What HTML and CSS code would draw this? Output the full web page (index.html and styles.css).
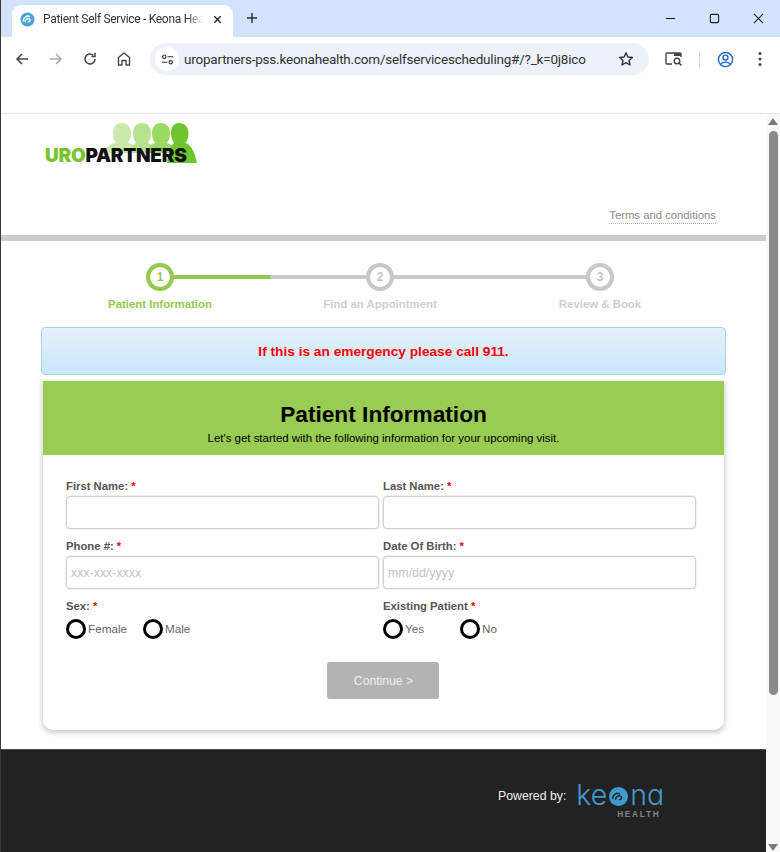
FILE: index.html
```html
<!DOCTYPE html>
<html lang="en">
<head>
<meta charset="utf-8">
<title>Patient Self Service - Keona Health</title>
<link rel="stylesheet" href="styles.css">
</head>
<body>
<div class="browser">
  <div class="tabstrip">
    <div class="tab">
      <svg class="favicon" viewBox="0 0 16 16"><circle cx="8" cy="8" r="7.5" fill="#4aa3d8"/><path d="M3.5 9.5C3.5 6 7 3.5 10 4.5M5.5 10.5C5.5 7.8 8 6.2 10 7.2 11.5 8 11 10.5 9 10.5" fill="none" stroke="#fff" stroke-width="1.5" stroke-linecap="round"/></svg>
      <span class="tab-title">Patient Self Service - Keona Hea</span>
      <svg class="tab-close" viewBox="0 0 10 10"><path d="M1.5 1.5l7 7M8.5 1.5l-7 7" stroke="#222" stroke-width="1.5"/></svg>
    </div>
    <svg class="newtab" viewBox="0 0 12 12"><path d="M6 1v10M1 6h10" stroke="#333" stroke-width="1.5"/></svg>
    <div class="winctl">
      <svg viewBox="0 0 12 12"><path d="M1 6h10" stroke="#222" stroke-width="1.2"/></svg>
      <svg viewBox="0 0 12 12"><rect x="1.5" y="1.5" width="9" height="9" rx="1.5" fill="none" stroke="#222" stroke-width="1.2"/></svg>
      <svg viewBox="0 0 12 12"><path d="M1 1l10 10M11 1L1 11" stroke="#222" stroke-width="1.2"/></svg>
    </div>
  </div>
  <div class="toolbar">
    <div class="navbtns">
      <svg viewBox="0 0 16 16"><path d="M14 8H3M8 3L3 8l5 5" fill="none" stroke="#444" stroke-width="1.5"/></svg>
      <svg viewBox="0 0 16 16"><path d="M2 8h11M8 3l5 5-5 5" fill="none" stroke="#aaa" stroke-width="1.5"/></svg>
      <svg viewBox="0 0 16 16"><path d="M13 8a5 5 0 1 1-1.6-3.7M13 1.8v3.6H9.4" fill="none" stroke="#444" stroke-width="1.5"/></svg>
      <svg viewBox="0 0 16 16"><path d="M2.5 14V6.5L8 2l5.500 4.500V14H10V9.500H6V14z" fill="none" stroke="#444" stroke-width="1.4" stroke-linejoin="round"/></svg>
    </div>
    <div class="omnibox">
      <span class="site-chip"><svg viewBox="0 0 14 14"><circle cx="3.500" cy="4" r="1.800" fill="none" stroke="#333" stroke-width="1.200"/><path d="M7 4h6M1 10h6" stroke="#333" stroke-width="1.200"/><circle cx="10.500" cy="10" r="1.800" fill="none" stroke="#333" stroke-width="1.200"/></svg></span>
      <span class="url">uropartners-pss.keonahealth.com/selfservicescheduling#/?_k=0j8ico</span>
      <svg class="star" viewBox="0 0 16 16"><path d="M8 1.800l1.900 4.200 4.500.5-3.400 3 1 4.500L8 11.700 4 14l1-4.500-3.400-3 4.500-.5z" fill="none" stroke="#333" stroke-width="1.400" stroke-linejoin="round"/></svg>
    </div>
    <div class="tools">
      <svg class="tool-lens" viewBox="0 0 18 16"><path d="M7 13H2a1 1 0 0 1-1-1V3a1 1 0 0 1 1-1h13a1 1 0 0 1 1 1v3" fill="none" stroke="#444" stroke-width="1.400"/><path d="M9 2h7v3H9z" fill="#444"/><circle cx="12" cy="10" r="2.800" fill="none" stroke="#444" stroke-width="1.400"/><path d="M14 12l2.500 2.500" stroke="#444" stroke-width="1.500"/></svg>
      <span class="tool-sep"></span>
      <svg class="tool-profile" viewBox="0 0 18 18"><circle cx="9" cy="9" r="7.500" fill="none" stroke="#1f66d1" stroke-width="1.500"/><circle cx="9" cy="7" r="2.600" fill="none" stroke="#1f66d1" stroke-width="1.500"/><path d="M4 14c1.500-3 8.500-3 10 0" fill="none" stroke="#1f66d1" stroke-width="1.500"/></svg>
      <svg class="tool-menu" viewBox="0 0 4 16"><circle cx="2" cy="2.500" r="1.500" fill="#444"/><circle cx="2" cy="8" r="1.500" fill="#444"/><circle cx="2" cy="13.500" r="1.500" fill="#444"/></svg>
    </div>
  </div>
  <div class="bookmarks"></div>
  <div class="viewport">
    <div class="page">
      <header class="site-header">
        <div class="logo">
          <svg class="logo-people" viewBox="0 0 152 40">
            <path fill="#cbe9ab" d="M77 0c5.500 0 9 4 9 10 0 4-1 7-3 10 5 1 9 4 11 10H57c3-6 9-9 14-10-2-3-3-6-3-10C68 4 71.500 0 77 0z"/>
            <path fill="#b7e28e" d="M97 0c5.500 0 9 4 9 10 0 4-1 7-3 10 4 1 7 4 9 10H83c2-6 6-9 8-10-2-3-3-6-3-10C88 4 91.500 0 97 0z"/>
            <path fill="#9bd962" d="M116 0c5.500 0 9 4 9 10 0 4-1 7-3 10 4 1 7 4 9 10h-30c2-6 6-9 9-10-2-3-3-6-3-10 0-6 3.500-10 9-10z"/>
            <path fill="#6dc62e" d="M134 0c5.500 0 9.500 4 9.500 10 0 4-1 7-3 10 5 1.500 9 8 11.500 20h-30c1-10 4-18 7-20-2-3-3-6-3-10 0-6 3-10 8-10z"/>
          </svg>
          <span class="logo-text"><span class="logo-uro">URO</span>PARTNERS</span>
        </div>
        <div class="terms-row"><a class="terms">Terms and conditions</a></div>
      </header>
      <div class="divider"></div>
      <ol class="steps">
        <li class="step step-active">
          <span class="step-circle">1</span>
          <span class="step-label">Patient Information</span>
        </li>
        <li class="step">
          <span class="step-circle">2</span>
          <span class="step-label">Find an Appointment</span>
        </li>
        <li class="step">
          <span class="step-circle">3</span>
          <span class="step-label">Review &amp; Book</span>
        </li>
      </ol>
      <div class="alert">If this is an emergency please call 911.</div>
      <section class="card">
        <div class="card-head">
          <h1>Patient Information</h1>
          <p>Let's get started with the following information for your upcoming visit.</p>
        </div>
        <form class="form">
          <div class="form-grid">
            <div class="field">
              <label class="label">First Name: <b>*</b></label>
              <input class="input" type="text">
            </div>
            <div class="field">
              <label class="label">Last Name: <b>*</b></label>
              <input class="input" type="text">
            </div>
            <div class="field">
              <label class="label">Phone #: <b>*</b></label>
              <input class="input" type="text" placeholder="xxx-xxx-xxxx">
            </div>
            <div class="field">
              <label class="label">Date Of Birth: <b>*</b></label>
              <input class="input" type="text" placeholder="mm/dd/yyyy">
            </div>
            <div class="field">
              <span class="label">Sex: <b>*</b></span>
              <div class="radios">
                <span class="radio"><i></i><span class="radio-text">Female</span></span>
                <span class="radio"><i></i><span class="radio-text">Male</span></span>
              </div>
            </div>
            <div class="field">
              <span class="label">Existing Patient <b>*</b></span>
              <div class="radios">
                <span class="radio"><i></i><span class="radio-text">Yes</span></span>
                <span class="radio"><i></i><span class="radio-text">No</span></span>
              </div>
            </div>
          </div>
          <div class="actions"><button class="continue" type="button">Continue &gt;</button></div>
        </form>
      </section>
      <footer class="footer">
        <span class="powered">Powered by:</span>
        <div class="keona">
          <div class="keona-word">ke<svg class="keona-o" viewBox="0 0 20 20"><circle cx="10" cy="10" r="10" fill="#3f9ad0"/><path d="M4 12c0-4 4-6.500 7-5M7 13c0-3 3-4.500 5-3.500s1.500 4-1 3.800" fill="none" stroke="#222" stroke-width="1.500" stroke-linecap="round"/></svg>na</div>
          <div class="keona-sub">HEALTH</div>
        </div>
      </footer>
    </div>
    <div class="scrollbar">
      <span class="arrow-up"></span>
      <span class="thumb"></span>
      <span class="arrow-down"></span>
    </div>
  </div>
</div>
</body>
</html>
```

FILE: styles.css
```css
* { box-sizing: border-box; }
html, body { margin: 0; padding: 0; }
body { width: 780px; height: 852px; overflow: hidden; background: #fff; font-family: "Liberation Sans", Arial, sans-serif; }
.browser { display: flex; flex-direction: column; height: 852px; border-left: 1px solid #3a3a3a; }

.tabstrip { height: 37px; background: #d3e3fd; display: flex; align-items: flex-end; padding-left: 11px; }
.tab { width: 221px; height: 32px; background: #fff; border-radius: 9px 9px 0 0; display: flex; align-items: center; padding: 0 9px 4px 8px; }
.favicon { width: 15px; height: 15px; flex: none; }
.tab-title { font: 12px Roboto, sans-serif; line-height: 16px; letter-spacing: -.3px; color: #333; margin-left: 8px; width: 160px; white-space: nowrap; -webkit-mask-image: linear-gradient(90deg, #000 90%, transparent); mask-image: linear-gradient(90deg, #000 90%, transparent); }
.tab-close { width: 9px; height: 9px; margin-left: 10px; flex: none; }
.newtab { width: 12px; height: 12px; margin: 0 0 13px 13px; flex: none; }
.winctl { display: flex; margin-left: auto; gap: 33px; padding-right: 16px; margin-bottom: 13px; }
.winctl svg { width: 11px; height: 11px; display: block; }

.toolbar { height: 44px; padding-top: 6px; display: flex; align-items: flex-start; background: #fff; }
.navbtns { display: flex; width: 149px; gap: 18px; padding: 8px 0 0 13px; }
.navbtns svg { width: 16px; height: 16px; flex: none; }
.omnibox { width: 499px; height: 32px; border-radius: 16px; background: #edf2fa; display: flex; align-items: center; padding: 0 15px 0 5px; }
.site-chip { width: 24px; height: 24px; border-radius: 50%; background: #fff; display: flex; align-items: center; justify-content: center; flex: none; }
.site-chip svg { width: 13px; height: 13px; }
.url { font: 13.500px Roboto, sans-serif; letter-spacing: -.21px; color: #333; margin-left: 5px; white-space: nowrap; flex: 1; }
.star { width: 16px; height: 16px; flex: none; }
.tools { display: flex; align-items: center; height: 32px; padding-left: 16px; }
.tool-lens { width: 18px; height: 16px; }
.tool-sep { width: 1px; height: 15px; background: #c7d9f5; margin: 0 17px 0 16px; }
.tool-profile { width: 17px; height: 17px; }
.tool-menu { width: 4px; height: 16px; margin-left: 24px; }
.bookmarks { height: 33px; background: #fff; border-bottom: 1px solid #e3e3e3; }

.viewport { flex: 1; min-height: 0; display: flex; }
.page { width: 765px; display: flex; flex-direction: column; }
.site-header { height: 121px; display: flex; flex-direction: column; justify-content: space-between; }
.logo { position: relative; width: 152px; height: 40px; margin: 9px 0 0 44px; }
.logo-people { width: 152px; height: 40px; display: block; }
.logo-text { position: absolute; left: 0; bottom: 0; font: 900 19px/15px Inter, "Liberation Sans", sans-serif; color: #111; letter-spacing: -.25px; white-space: nowrap; }
.logo-uro { color: #76c52f; }
.terms-row { display: flex; justify-content: flex-end; padding: 0 50px 11px 0; }
.terms { font-size: 11.300px; line-height: 15px; color: #8a8a8a; border-bottom: 1px dotted #aaa; }
.divider { height: 6px; background: #cccccc; }

.steps { list-style: none; margin: 0; padding: 22px 0 0 49px; display: flex; height: 82px; }
.step { width: 220px; display: flex; flex-direction: column; align-items: center; position: relative; }
.step::before { content: ""; position: absolute; top: 12px; left: 110px; width: 220px; height: 4px; background: #c8c8c8; }
.step:last-child::before { display: none; }
.step-active::after { content: ""; position: absolute; top: 12px; left: 110px; width: 110px; height: 4px; background: #94c94e; }
.step-circle { position: relative; z-index: 1; width: 28px; height: 28px; border-radius: 50%; border: 4px solid #c8c8c8; background: #fff; color: #c8c8c8; font-size: 12px; font-weight: bold; display: flex; align-items: center; justify-content: center; }
.step-label { margin-top: 6px; font-size: 11.400px; line-height: 14px; font-weight: bold; color: #cfcfcf; }
.step-active .step-circle { border-color: #94c94e; color: #94c94e; }
.step-active .step-label { color: #94c94e; }

.alert { margin: 4px 0 0 40px; width: 685px; height: 48px; border: 1px solid #a9d3ec; border-radius: 4px; background: linear-gradient(#e5f1f8, #c8e7fb); color: #f00; font-size: 13.700px; font-weight: bold; display: flex; align-items: center; justify-content: center; }

.card { margin: 6px 0 0 42px; width: 681px; height: 349px; background: #fff; border-radius: 0 0 10px 10px; box-shadow: 0 2px 5px 1px rgba(0,0,0,.2); }
.card-head { height: 74px; background: #99cc52; text-align: center; padding-top: 21px; color: #000; }
.card-head h1 { margin: 0; font-size: 22.700px; line-height: 24px; font-weight: bold; }
.card-head p { margin: 5px 0 0; font-size: 11.450px; line-height: 14px; }
.form { padding: 24px 28px 0 23px; }
.form-grid { display: grid; grid-template-columns: 313px 313px; column-gap: 4px; row-gap: 10px; }
.field { display: flex; flex-direction: column; }
.label { font-size: 11.300px; line-height: 14px; font-weight: bold; color: #555; margin-bottom: 3px; }
.label b { color: #f00; }
.input { height: 33px; border: 1px solid #d0d0d0; border-radius: 4px; padding: 0 4px; font: 12.400px "Liberation Sans", sans-serif; background: #fff; box-shadow: 0 0 0 .5px #e2e2e2; outline: none; }
.input::placeholder { color: #c2c2c2; opacity: 1; }
.radios { display: flex; gap: 16px; margin-top: 3px; }
.radio { display: flex; align-items: center; font-size: 11.700px; color: #666; width: 61px; flex: none; white-space: nowrap; }
.radio i { width: 20px; height: 20px; border: 3px solid #000; border-radius: 50%; background: #fff; margin-right: 2px; flex: none; }
.radio-text { padding-bottom: 2px; }
.actions { display: flex; justify-content: center; padding: 23px 0 0 3px; }
.continue { width: 112px; height: 37px; border: 0; border-radius: 3px; background: #b3b3b3; color: #eee; padding: 0 0 0 2px; font: 12.200px "Liberation Sans", sans-serif; }

.footer { margin-top: 19px; flex: 1; background: #222; border-top: 1px solid #4a4a4a; display: flex; align-items: flex-start; padding: 31px 0 0 497px; }
.powered { font-size: 12.300px; line-height: 30px; color: #eee; }
.keona { margin-left: 10px; width: 85px; }
.keona-word { display: flex; align-items: center; font: 300 28.500px/22px Inter, sans-serif; font-feature-settings: "cv11" 1; color: #3f9ad0; height: 28px; }
.keona-o { width: 19px; height: 19px; margin: 3px 2px 0 2px; flex: none; }
.keona-sub { text-align: right; padding-right: 1px; font: bold 8.300px/10px "Liberation Sans", sans-serif; letter-spacing: 1.700px; color: #828282; }

.scrollbar { flex: 1; background: #f9f9f9; display: flex; flex-direction: column; align-items: center; padding: 4px 0 1px; }
.arrow-up { border: 5px solid transparent; border-top: 0; border-bottom: 7px solid #7a7a7a; }
.thumb { width: 9px; height: 564px; background: #8a8a8a; border-radius: 5px; margin-top: 6px; }
.arrow-down { margin-top: auto; border: 5px solid transparent; border-bottom: 0; border-top: 7px solid #7a7a7a; }
```
